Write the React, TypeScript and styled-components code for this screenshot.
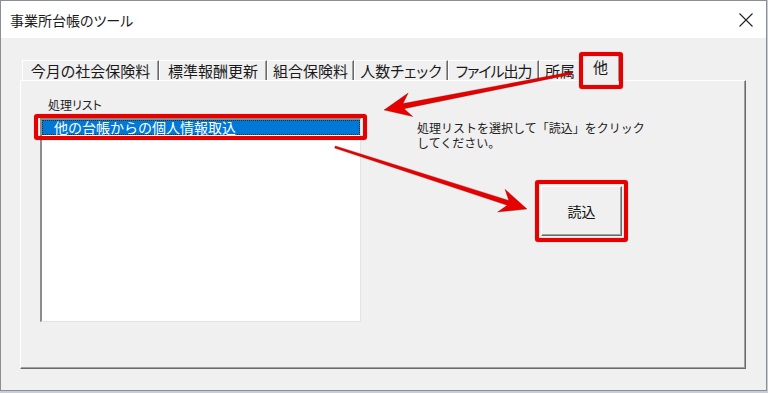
import styled, {createGlobalStyle} from "styled-components";

const GlobalStyle = createGlobalStyle`
  body {
    margin: 0;
    background: #c9ced6;
    font-family: "Noto Sans CJK JP", "Noto Sans", sans-serif;
    color: #000;
  }
`;

const Window = styled.div`
  position: relative;
  box-sizing: border-box;
  width: 767px;
  height: 391px;
  border: 1px solid #8a8f96;
  background: #f0f0f0;
  display: flex;
  flex-direction: column;
`;

const TitleBar = styled.div`
  height: 37px;
  flex-shrink: 0;
  background: #fff;
  display: flex;
  align-items: center;
  justify-content: space-between;
  padding: 0 13px 0 9px;
`;

const Title = styled.span`
  font-size: 14px;
  font-feature-settings: "palt";
  color: #1a1a1a;
`;

const Client = styled.div`
  flex: 1;
  display: flex;
  flex-direction: column;
  padding: 17px 20px 21px 19px;
`;

const TabStrip = styled.div`
  position: relative;
  z-index: 1;
  height: 25px;
  display: flex;
  align-items: flex-end;
  padding-left: 2px;
`;

const Tab = styled.div<{ $w: number; $ls?: number; $active?: boolean }>`
  position: relative;
  box-sizing: border-box;
  width: ${(p) => p.$w}px;
  height: ${(p) => (p.$active ? 26 : 20)}px;
  margin-bottom: ${(p) => (p.$active ? -1 : 0)}px;
  background: #f0f0f0;
  border-top: 1px solid #fff;
  border-left: 1px solid #fff;
  border-right: 1px solid #696969;
  box-shadow: inset -1px 0 0 #a0a0a0;
  display: flex;
  align-items: center;
  justify-content: center;
  padding-bottom: ${(p) => (p.$active ? 4 : 0)}px;
  font-size: 15px;
  letter-spacing: ${(p) => p.$ls ?? 0}px;
  font-feature-settings: "palt";
  white-space: nowrap;
  color: #1a1a1a;
`;

const Panel = styled.div`
  flex: 1;
  display: flex;
  border-top: 1px solid #fff;
  border-left: 1px solid #fff;
  border-right: 1px solid #696969;
  border-bottom: 1px solid #696969;
  box-shadow: inset -1px -1px 0 #a0a0a0;
  padding: 16px 0 0 19px;
`;

const LeftColumn = styled.div`
  width: 321px;
  display: flex;
  flex-direction: column;
  gap: 5px;
`;

const ListLabel = styled.div`
  font-size: 12px;
  line-height: 16px;
  font-feature-settings: "palt";
  padding-left: 8px;
  color: #222;
`;

const ListBox = styled.div`
  box-sizing: border-box;
  height: 204px;
  background: #fff;
  border-style: solid;
  border-width: 2px 1px 1px 2px;
  border-color: #8c8c8c #e3e3e3 #e3e3e3 #8c8c8c;
`;

const ListItem = styled.div`
  position: relative;
  height: 15px;
  box-sizing: border-box;
  background: #0078d7;
  border: 1px dotted #3a2a10;
  color: #fff;
  font-size: 14px;
  line-height: 12px;
  padding-left: 11px;
  white-space: nowrap;
`;

const RightColumn = styled.div`
  display: flex;
  flex-direction: column;
  align-items: flex-start;
  padding: 23px 0 0 56px;
`;

const Hint = styled.p`
  margin: 0;
  font-size: 12px;
  line-height: 15px;
  color: #222;
`;

const ButtonWrap = styled.div`
  position: relative;
  margin: 36px 0 0 124px;
`;

const Button = styled.button`
  box-sizing: border-box;
  width: 81px;
  height: 50px;
  background: #f0f0f0;
  border-style: solid;
  border-width: 1px;
  border-color: #fff #696969 #696969 #fff;
  box-shadow: inset -1px -1px 0 #a0a0a0;
  font-family: inherit;
  font-size: 14px;
  color: #111;
  padding: 0;
`;

const RedFrame = styled.span<{ $t: number; $r: number; $b: number; $l: number }>`
  position: absolute;
  top: ${(p) => p.$t}px;
  right: ${(p) => p.$r}px;
  bottom: ${(p) => p.$b}px;
  left: ${(p) => p.$l}px;
  border: 4px solid #e60000;
  border-radius: 3px;
  box-shadow: 0 0 1px rgba(90, 0, 0, 0.6), inset 0 0 1px rgba(90, 0, 0, 0.6);
  pointer-events: none;
  z-index: 4;
`;

const Overlay = styled.svg`
  position: absolute;
  left: -1px;
  top: -1px;
  pointer-events: none;
  z-index: 5;
`;

const tabs = [
    {label: "今月の社会保険料", w: 137},
    {label: "標準報酬更新", w: 108},
    {label: "組合保険料", w: 87},
    {label: "人数チェック", w: 94},
    {label: "ファイル出力", w: 91, ls: -1},
    {label: "所属", w: 42},
    {label: "他", w: 39, active: true},
];

// Snagit風の矢印（先端に向かって太くなる）
const arrowPoints = (x1: number, y1: number, x2: number, y2: number) => {
    const len = Math.hypot(x2 - x1, y2 - y1);
    const ux = (x2 - x1) / len;
    const uy = (y2 - y1) / len;
    const nx = -uy;
    const ny = ux;
    const H = 27, W = 12, N = 7;
    const bx = x2 - ux * (H - N);
    const by = y2 - uy * (H - N);
    const wx = x2 - ux * H;
    const wy = y2 - uy * H;
    const pts = [
        [x2, y2],
        [wx + nx * W, wy + ny * W],
        [bx + nx * 2.6, by + ny * 2.6],
        [x1 + nx * 1.2, y1 + ny * 1.2],
        [x1 - nx * 1.2, y1 - ny * 1.2],
        [bx - nx * 2.6, by - ny * 2.6],
        [wx - nx * W, wy - ny * W],
    ];
    return pts.map(([x, y]) => `${x.toFixed(1)},${y.toFixed(1)}`).join(" ");
};

const App = () => {
    return (
        <>
            <GlobalStyle/>
            <Window>
                <TitleBar>
                    <Title>事業所台帳のツール</Title>
                    <svg width="14" height="14" viewBox="0 0 14 14">
                        <path d="M0.5 0.5 L13.5 13.5 M13.5 0.5 L0.5 13.5" stroke="#222" strokeWidth="1.1"/>
                    </svg>
                </TitleBar>
                <Client>
                    <TabStrip>
                        {tabs.map((t) => (
                            <Tab key={t.label} $w={t.w} $ls={t.ls} $active={t.active}>
                                {t.label}
                                {t.active && <RedFrame $t={-4} $r={-4} $b={-8} $l={-3}/>}
                            </Tab>
                        ))}
                    </TabStrip>
                    <Panel>
                        <LeftColumn>
                            <ListLabel>処理リスト</ListLabel>
                            <ListBox>
                                <ListItem>
                                    他の台帳からの個人情報取込
                                    <RedFrame $t={-7} $r={-8} $b={-6} $l={-9}/>
                                </ListItem>
                            </ListBox>
                        </LeftColumn>
                        <RightColumn>
                            <Hint>処理リストを選択して「読込」をクリック<br/>してください。</Hint>
                            <ButtonWrap>
                                <Button>読込</Button>
                                <RedFrame $t={-6} $r={-6} $b={-6} $l={-6}/>
                            </ButtonWrap>
                        </RightColumn>
                    </Panel>
                </Client>
                <Overlay width="768" height="393" viewBox="0 0 768 393">
                    <polygon points={arrowPoints(572, 73, 384, 110)} fill="#e60000" stroke="rgba(120,0,0,0.5)" strokeWidth="0.6"/>
                    <polygon points={arrowPoints(335, 147, 527, 209)} fill="#e60000" stroke="rgba(120,0,0,0.5)" strokeWidth="0.6"/>
                </Overlay>
            </Window>
        </>
    );
};

export default App;
